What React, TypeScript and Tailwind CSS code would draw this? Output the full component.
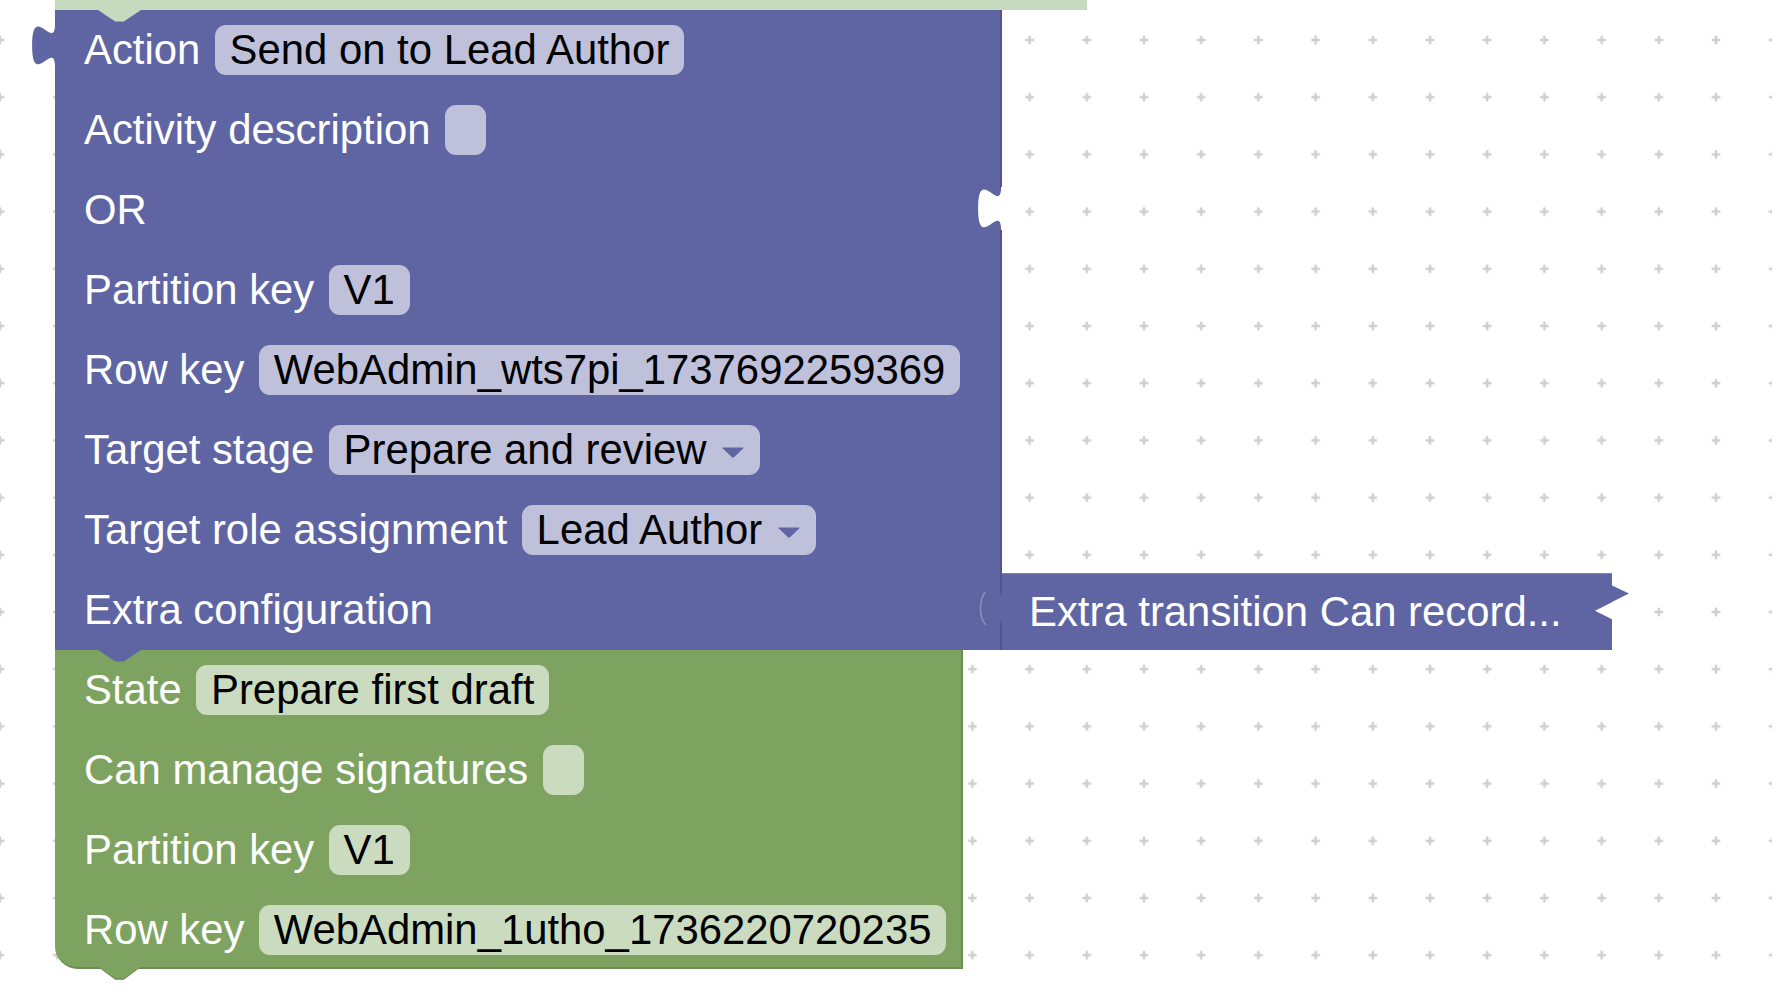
import React from "react";

type Field =
  | { kind: "text"; value: string }
  | { kind: "dropdown"; value: string }
  | { kind: "checkbox" }
  | { kind: "none" };

type RowDef = { label: string; field: Field };

const purpleRows: RowDef[] = [
  { label: "Action", field: { kind: "text", value: "Send on to Lead Author" } },
  { label: "Activity description", field: { kind: "checkbox" } },
  { label: "OR", field: { kind: "none" } },
  { label: "Partition key", field: { kind: "text", value: "V1" } },
  { label: "Row key", field: { kind: "text", value: "WebAdmin_wts7pi_1737692259369" } },
  { label: "Target stage", field: { kind: "dropdown", value: "Prepare and review" } },
  { label: "Target role assignment", field: { kind: "dropdown", value: "Lead Author" } },
  { label: "Extra configuration", field: { kind: "none" } },
];

const greenRows: RowDef[] = [
  { label: "State", field: { kind: "text", value: "Prepare first draft" } },
  { label: "Can manage signatures", field: { kind: "checkbox" } },
  { label: "Partition key", field: { kind: "text", value: "V1" } },
  { label: "Row key", field: { kind: "text", value: "WebAdmin_1utho_1736220720235" } },
];

const PURPLE = "#5f65a3";
const GREEN = "#7ea360";

function Arrow() {
  return (
    <svg width="22" height="11" viewBox="0 0 22 11" className="ml-[15.5px] mt-[5px] shrink-0">
      <path d="M1 0.5 H21 Q22 0.5 21.2 1.4 L12 10.2 Q11 11 10 10.2 L0.8 1.4 Q0 0.5 1 0.5 Z" fill={PURPLE} />
    </svg>
  );
}

function Row({ row, variant }: { row: RowDef; variant: "purple" | "green" }) {
  const pill =
    variant === "purple"
      ? "ml-[14.3px] h-[50px] rounded-[11px] bg-[#bfc1db] text-black flex items-center whitespace-nowrap"
      : "ml-[14.3px] h-[50px] rounded-[11px] bg-[#cadbc0] text-black flex items-center whitespace-nowrap";
  const box =
    variant === "purple"
      ? "ml-[14.3px] h-[50px] w-[41px] rounded-[11px] bg-[#bfc1db]"
      : "ml-[14.3px] h-[50px] w-[41px] rounded-[11px] bg-[#cadbc0]";
  const f = row.field;
  return (
    <div className="h-[80px] shrink-0 flex items-center pl-[29px] text-white whitespace-nowrap">
      <span>{row.label}</span>
      {f.kind === "text" && <span className={pill + " px-[15px]"}>{f.value}</span>}
      {f.kind === "dropdown" && (
        <span className={pill + " pl-[15px] pr-[16px]"}>
          {f.value}
          <Arrow />
        </span>
      )}
      {f.kind === "checkbox" && <span className={box} />}
    </div>
  );
}

const TAB_UP = "M25 42.9 L24 42.9 c0 -28.6 -22.9 22.9 -22.9 -21.45 s22.9 7.15 22.9 -21.45 L25 0 Z";
const TAB_DOWN = "M26 0 L25 0 c0 28.6 -22.9 -22.9 -22.9 21.45 s22.9 -7.15 22.9 21.45 L26 42.9 Z";

export default function App() {
  return (
    <div className="relative w-[1772px] h-[1004px] overflow-hidden bg-white font-['Liberation_Sans',Arial,sans-serif] text-[41.85px] leading-none">
      {/* workspace grid */}
      <svg className="absolute inset-0" width="1772" height="1004">
        <defs>
          <pattern id="grid" x="-28.6" y="11.4" width="57.2" height="57.2" patternUnits="userSpaceOnUse">
            <line x1="24.3" y1="28.6" x2="32.9" y2="28.6" stroke="#cfcfcf" strokeWidth="2.5" />
            <line x1="28.6" y1="24.3" x2="28.6" y2="32.9" stroke="#cfcfcf" strokeWidth="2.5" />
          </pattern>
        </defs>
        <rect width="1772" height="1004" fill="url(#grid)" />
      </svg>

      {/* block stack */}
      <div className="absolute left-[55px] top-0 flex flex-col">
        <div className="h-[10px] w-[1032px] bg-[#c6dbbd]" />

        <div className="relative w-[947px] bg-[#5f65a3] border-r-2 border-[#50558f]">
          <svg className="absolute left-[42.9px] top-0" width="43" height="12" viewBox="0 0 43 12">
            <polygon points="0,0 43,0 25.8,11.6 17.2,11.6" fill="#c6dbbd" />
          </svg>
          <svg className="absolute left-[-24px] top-[14.3px]" width="25" height="43" viewBox="0 0 25 43">
            <path d={TAB_UP} fill={PURPLE} />
          </svg>
          <svg className="absolute right-[-2px] top-[177px]" width="26" height="43" viewBox="0 0 26 43">
            <path d={TAB_DOWN} fill="#ffffff" />
          </svg>
          {purpleRows.map((r, i) => (
            <Row key={i} row={r} variant="purple" />
          ))}
        </div>

        <div className="relative h-[319px] w-[908px] bg-[#7ea360] rounded-bl-[23px] border-r-2 border-b-2 border-[#6b8e50]">
          <svg className="absolute left-[42.9px] top-0" width="43" height="12" viewBox="0 0 43 12">
            <polygon points="0,0 43,0 25.8,11.6 17.2,11.6" fill={PURPLE} />
          </svg>
          <svg className="absolute left-[42.9px] top-full" width="43" height="14" viewBox="0 0 43 14">
            <polygon points="0,0 43,0 25.8,12.8 17.2,12.8" fill="#6b8e50" />
            <polygon points="0,0 43,0 25.8,11 17.2,11" fill={GREEN} />
          </svg>
          {greenRows.map((r, i) => (
            <Row key={i} row={r} variant="green" />
          ))}
        </div>
      </div>

      {/* collapsed "Extra transition" block */}
      <div className="absolute left-[1002px] top-[573px] w-[610px] h-[77px] bg-[#5f65a3] border-t border-[#7d83b8] flex items-center pl-[27px] text-white whitespace-nowrap">
        <span>Extra transition Can record...</span>
        <svg className="absolute left-[-24px] top-[13.3px]" width="25" height="43" viewBox="0 0 25 43">
          <path d={TAB_UP} fill={PURPLE} />
          <path d="M8 38 C3 33 2.5 26 2.5 21.45 C2.5 16 3.5 10 7 5" fill="none" stroke="rgba(255,255,255,0.3)" strokeWidth="1.4" />
        </svg>
        <svg className="absolute left-[593px] top-[11px]" width="34" height="35" viewBox="0 0 34 35">
          <polygon points="16,0 34,8.6 16,17.6" fill={PURPLE} />
          <polygon points="17,17.15 0,25.7 17,34.3 18,34.3 18,17" fill="#ffffff" />
        </svg>
      </div>
    </div>
  );
}
